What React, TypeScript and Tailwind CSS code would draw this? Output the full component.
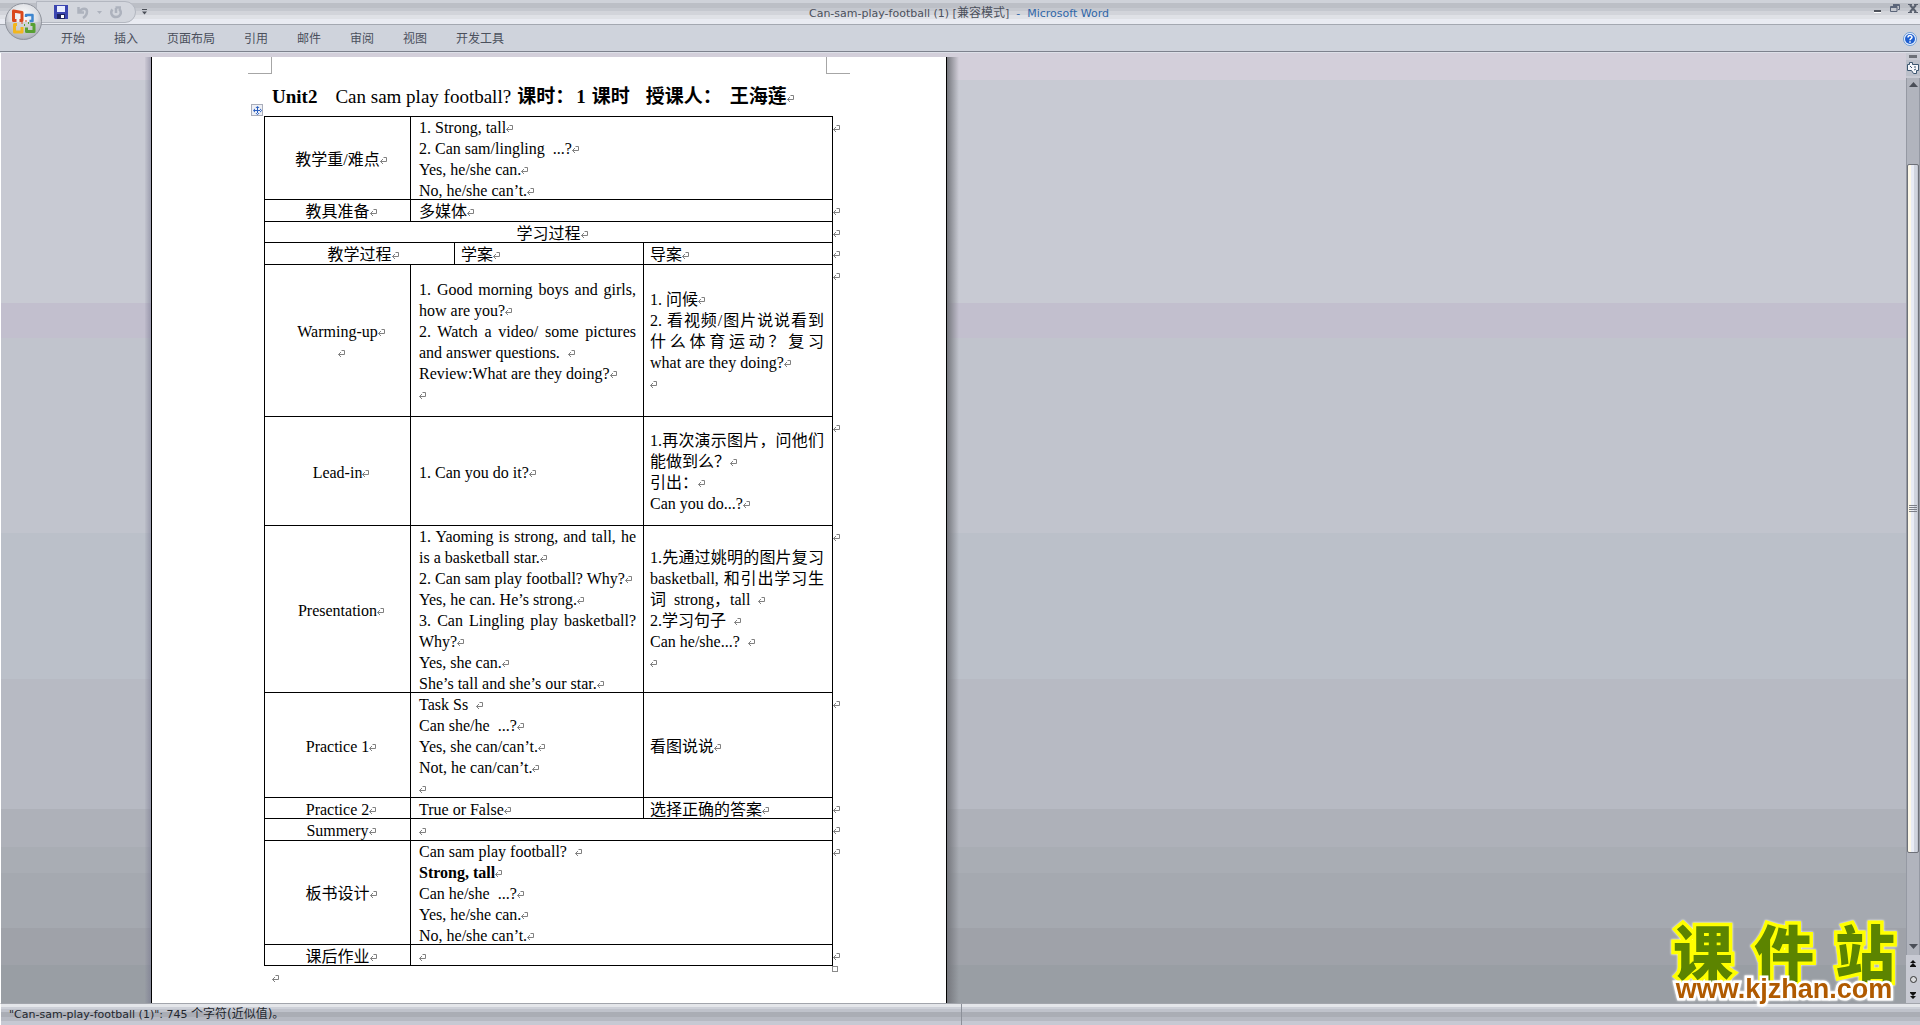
interface Line {
  text?: string;
  bold?: boolean;
  justify?: boolean;
  // blank between the text and its paragraph mark
  gap?: boolean;
  // wrapped line, the paragraph goes on below
  soft?: boolean;
}

interface CellData {
  lines: Line[];
  span?: number;
  center?: boolean;
  tight?: boolean;
}

interface RowData {
  height: string;
  cells: CellData[];
}

const TABS = ["开始", "插入", "页面布局", "引用", "邮件", "审阅", "视图", "开发工具"];

const label = (...texts: string[]): CellData => ({
  center: true,
  lines: texts.map((text) => ({ text })),
});

const ROWS: RowData[] = [
  {
    height: "h-[83px]",
    cells: [
      label("教学重/难点"),
      {
        span: 3,
        lines: [
          { text: "1. Strong, tall" },
          { text: "2. Can sam/lingling  ...?" },
          { text: "Yes, he/she can." },
          { text: "No, he/she can’t." },
        ],
      },
    ],
  },
  {
    height: "h-[22px]",
    cells: [label("教具准备"), { span: 3, lines: [{ text: "多媒体" }] }],
  },
  {
    height: "h-[21px]",
    cells: [{ ...label("学习过程"), span: 4 }],
  },
  {
    height: "h-[22px]",
    cells: [
      { ...label("教学过程"), span: 2 },
      { tight: true, lines: [{ text: "学案" }] },
      { tight: true, lines: [{ text: "导案" }] },
    ],
  },
  {
    height: "h-[152px]",
    cells: [
      label("Warming-up", ""),
      {
        span: 2,
        lines: [
          { text: "1. Good morning boys and girls,", justify: true, soft: true },
          { text: "how are you?" },
          { text: "2. Watch a video/ some pictures", justify: true, soft: true },
          { text: "and answer questions. ", gap: true },
          { text: "Review:What are they doing?" },
          {},
        ],
      },
      {
        tight: true,
        lines: [
          { text: "1. 问候" },
          { text: "2. 看视频/图片说说看到", justify: true, soft: true },
          { text: "什么体育运动？复习", justify: true, soft: true },
          { text: "what are they doing?" },
          {},
        ],
      },
    ],
  },
  {
    height: "h-[109px]",
    cells: [
      label("Lead-in"),
      { span: 2, lines: [{ text: "1. Can you do it?" }] },
      {
        tight: true,
        lines: [
          { text: "1.再次演示图片，问他们", justify: true, soft: true },
          { text: "能做到么？" },
          { text: "引出：" },
          { text: "Can you do...?" },
        ],
      },
    ],
  },
  {
    height: "h-[167px]",
    cells: [
      label("Presentation"),
      {
        span: 2,
        lines: [
          { text: "1. Yaoming is strong, and tall, he", justify: true, soft: true },
          { text: "is a basketball star." },
          { text: "2. Can sam play football? Why?" },
          { text: "Yes, he can. He’s strong." },
          { text: "3. Can Lingling play basketball?", justify: true, soft: true },
          { text: "Why?" },
          { text: "Yes, she can." },
          { text: "She’s tall and she’s our star." },
        ],
      },
      {
        tight: true,
        lines: [
          { text: "1.先通过姚明的图片复习", justify: true, soft: true },
          { text: "basketball, 和引出学习生", justify: true, soft: true },
          { text: "词  strong，tall ", gap: true },
          { text: "2.学习句子 ", gap: true },
          { text: "Can he/she...? ", gap: true },
          {},
        ],
      },
    ],
  },
  {
    height: "h-[105px]",
    cells: [
      label("Practice 1"),
      {
        span: 2,
        lines: [
          { text: "Task Ss ", gap: true },
          { text: "Can she/he  ...?" },
          { text: "Yes, she can/can’t." },
          { text: "Not, he can/can’t." },
          {},
        ],
      },
      { tight: true, lines: [{ text: "看图说说" }] },
    ],
  },
  {
    height: "h-[21px]",
    cells: [
      label("Practice 2"),
      { span: 2, lines: [{ text: "True or False" }] },
      { tight: true, lines: [{ text: "选择正确的答案" }] },
    ],
  },
  {
    height: "h-[22px]",
    cells: [label("Summery"), { span: 3, lines: [{}] }],
  },
  {
    height: "h-[104px]",
    cells: [
      label("板书设计"),
      {
        span: 3,
        lines: [
          { text: "Can sam play football? ", gap: true },
          { text: "Strong, tall", bold: true },
          { text: "Can he/she  ...?" },
          { text: "Yes, he/she can." },
          { text: "No, he/she can’t." },
        ],
      },
    ],
  },
  {
    height: "h-[22px]",
    cells: [label("课后作业"), { span: 3, lines: [{}] }],
  },
];

export default function App() {
  return (
    <div className="flex h-screen flex-col overflow-hidden bg-[#c8cad3] font-['DejaVu_Sans','Noto_Sans_CJK_SC',sans-serif] text-xs text-[#4b505c]">
      <TitleBar />
      <RibbonTabs />
      <main className="relative flex min-h-0 flex-1 border-l border-white">
        <div className="flex min-w-0 flex-1 overflow-hidden bg-[linear-gradient(#d3cfda_0_2.8%,#c8cad3_2.8%_26.3%,#c2bfce_26.3%_30%,#c1c4cd_30%_50.5%,#bbc0c9_50.5%_65.9%,#b7bac3_65.9%_79.6%,#aeb1b9_79.6%_83.6%,#a9adb4_83.6%_86.3%,#a5a9b0_86.3%_92.1%,#9fa2a9_92.1%_96%,#999ea4_96%)] pt-1">
          <div className="ml-36 w-1.5 bg-linear-to-r from-[#8c8ca0]/10 to-[#70708a]/50" />
          <DocumentPage />
          <div className="w-3 bg-linear-to-r from-[#75777d] to-transparent" />
        </div>
        <ScrollBar />
        <Watermark />
      </main>
      <StatusBar />
    </div>
  );
}

function TitleBar() {
  return (
    <header className="relative grid h-6 shrink-0 grid-cols-[1fr_auto_1fr] items-center bg-[linear-gradient(#cfd2d9_0_3px,#bcbfc6_3px_8px,#c5c8cf_8px_11px,#d2d4da_11px_15px,#dfe1e6_15px_19px,#e9ebf2_19px)] pr-0.5">
      {/* Quick access toolbar */}
      <div className="flex items-center pl-9">
        <div className="flex h-[22px] w-[100px] items-center rounded-r-full border border-[#b3b7c0] bg-[#d3d6dd] pl-[17px]">
          <button type="button" aria-label="保存">
            <SaveIcon />
          </button>
          <button type="button" aria-label="撤消" className="ml-2 flex items-center gap-2">
            <svg width="13" height="13" viewBox="0 0 13 13" fill="none">
              <path d="M2.500 1v5.500H8M3 6C6 1.500 11 2 11 5.500c0 3-1.500 5-4 6.500" stroke="#adb2bd" strokeWidth="2.500" />
            </svg>
            <svg width="5" height="3" viewBox="0 0 5 3">
              <path d="M0 0h5L2.500 3z" fill="#adb2bd" />
            </svg>
          </button>
          <button type="button" aria-label="恢复" className="ml-2">
            <svg width="12" height="13" viewBox="0 0 12 13" fill="none">
              <path d="M2.500 3.500C0 6 1.500 11 6 11s6.500-5 3-8M5.500 1.500H11M6 2v5" stroke="#adb2bd" strokeWidth="2.500" />
            </svg>
          </button>
        </div>
        <button type="button" aria-label="自定义快速访问工具栏" className="ml-1.5">
          <svg width="5" height="6" viewBox="0 0 5 6" fill="#4b4f58">
            <path d="M0 0h5v1H0zM0 2.500h5L2.500 5.500z" />
          </svg>
        </button>
      </div>
      <h1 className="pt-0.5 text-[11px] whitespace-pre">
        Can-sam-play-football (1) [<span className="text-xs">兼容模式</span>]{"  "}
        <span className="text-[#2f66a8]">-  Microsoft Word</span>
      </h1>
      <div className="flex h-full items-start justify-end gap-2 pt-1">
        <button type="button" aria-label="最小化">
          <svg width="10" height="9" viewBox="0 0 10 9">
            <path d="M2 6h7v2H2z" fill="#4e525b" />
            <path d="M2 8h7v1H2z" fill="#fff" />
          </svg>
        </button>
        <button type="button" aria-label="还原">
          <svg width="10" height="9" viewBox="0 0 10 9" fill="none" stroke="#5b6579">
            <path d="M3 .5h6.500v5H8" />
            <path d="M3 1.500h6" />
            <path d="M.5 2.500h6.500v5H.5zM1 3.500h6" />
          </svg>
        </button>
        <button type="button" aria-label="关闭">
          <svg width="10" height="9" viewBox="0 0 10 9" fill="none">
            <path d="M2 1l6 7M8 1L2 8" stroke="#59606e" strokeWidth="2" />
            <path d="M0 .5h4M6 .5h4M0 8.500h4M6 8.500h4" stroke="#59606e" />
          </svg>
        </button>
      </div>
      <button type="button" aria-label="Office 按钮" className="absolute top-[3px] left-[5px] z-10">
        <OfficeOrb />
      </button>
    </header>
  );
}

function RibbonTabs() {
  return (
    <div className="flex h-[29px] shrink-0 items-center justify-between border-t border-b border-t-[#a4a8b1] border-b-[#dde0e8] bg-[#cfd3dc] pr-[3px] pl-[61px] shadow-[inset_0_-1px_#7d828d]">
      <nav className="flex gap-[29px]">
        {TABS.map((tab) => (
          <button key={tab} type="button">
            {tab}
          </button>
        ))}
      </nav>
      <button type="button" aria-label="帮助">
        <svg width="14" height="14" viewBox="0 0 14 14" fill="none">
          <circle cx="7" cy="7" r="6.500" fill="#eef4ff" stroke="#6d9bd3" />
          <circle cx="7" cy="7" r="5" fill="#1f5fd0" />
          <path d="M5 5.500C5 3 9 3 9 5.300 9 6.800 7 6.600 7 8.200M7 9.200v1.500" stroke="#fff" strokeWidth="1.500" />
        </svg>
      </button>
    </div>
  );
}

function DocumentPage() {
  return (
    <article className="w-[796px] shrink-0 border-x border-black bg-white px-24 font-['Liberation_Serif','Noto_Sans_CJK_SC',serif] text-base text-black">
      {/* Margin corners */}
      <div className="flex h-[17px] justify-between">
        <div className="w-6 border-r border-b border-[#a6a6a6]" />
        <div className="w-6 border-b border-l border-[#a6a6a6]" />
      </div>
      <h2 className="flex h-[42px] items-baseline pl-6 text-[19px] leading-[46px] font-bold whitespace-pre">
        <span>Unit2</span>
        <span className="ml-[18px] font-normal">Can sam play football?</span>
        <span className="ml-1.5">课时：</span>
        <span className="ml-0.5">1</span>
        <span className="ml-1.5">课时</span>
        <span className="ml-4">授课人：</span>
        <span className="ml-2">王海莲</span>
        <Mark />
      </h2>
      <div className="relative pl-4">
        <div className="absolute -top-3 left-[3px] flex size-3 items-center justify-center border border-[#a9adba] bg-[#eef0f6]">
          <svg width="9" height="9" viewBox="0 0 9 9" fill="#2b5fc0">
            <path d="M4 1h1v7H4zM1 4h7v1H1zM4.500 0L6.500 2h-4zM4.500 9l2-2h-4zM0 4.500l2-2v4zM9 4.500l-2-2v4z" />
          </svg>
        </div>
        <table className="w-full table-fixed border-separate border-spacing-0 leading-[21px]">
          <colgroup>
            <col className="w-[146px]" />
            <col className="w-[44px]" />
            <col className="w-[189px]" />
            <col className="w-[189px]" />
            <col />
          </colgroup>
          <tbody>
            {ROWS.map((row, i) => (
              <tr key={i} className={`group ${row.height}`}>
                {row.cells.map((cell, j) => (
                  <Cell key={j} cell={cell} />
                ))}
                <td className="border-l border-black p-0 align-top">
                  <div className="h-5 pt-px">
                    <Mark />
                  </div>
                </td>
              </tr>
            ))}
          </tbody>
        </table>
        <div className="ml-[568px] size-1.5 border border-[#8a8a8a]" />
      </div>
      <p className="pl-6 leading-3">
        <Mark />
      </p>
    </article>
  );
}

function Cell({ cell }: { cell: CellData }) {
  const pad = cell.center ? "px-2 text-center" : cell.tight ? "pr-2 pl-1.5" : "pr-[7px] pl-2";
  return (
    <td
      colSpan={cell.span}
      className={`border-t border-l border-black py-0 align-middle group-last:border-b ${pad}`}
    >
      <div className="-mb-0.5">
        {cell.lines.map((line, i) => (
          <p
            key={i}
            className={`h-[21px] whitespace-pre-wrap ${line.justify ? "[text-align-last:justify]" : ""} ${line.bold ? "font-bold" : ""}`}
          >
            {line.text}
            {line.gap && " "}
            {!line.soft && <Mark />}
          </p>
        ))}
      </div>
    </td>
  );
}

// Paragraph mark. Takes no width, so centred text stays centred.
function Mark() {
  return (
    <span className="inline-block w-0 overflow-visible">
      <svg className="inline-block max-w-none" width="7" height="8" viewBox="0 0 7 8" fill="none" stroke="#808080">
        <path d="M3.500 .5h3v4H.5M3 2L.5 4.500 3 7" />
      </svg>
    </span>
  );
}

function ScrollBar() {
  return (
    <div className="flex w-3.5 shrink-0 flex-col items-center bg-[#c8cad3]">
      <div className="mt-0.5 h-[3px] w-2 bg-[#6d7078]" />
      <button type="button" aria-label="标尺" className="my-0.5 flex h-4 w-full items-center justify-center bg-[#bcc0ca]">
        <svg width="12" height="12" viewBox="0 0 12 12" fill="#f6f7fb" stroke="#3c5670">
          <path d="M.5 2.500h2v-2h3v2h6v6h-2v3h-3l-2-3h-4z" />
          <path d="M3 4l2 2M8 4v2M7 8l2-1" />
        </svg>
      </button>
      <div className="flex w-full flex-1 flex-col items-center border-x border-[#9599a3] bg-[#b1b4bd]">
        <button type="button" aria-label="向上滚动" className="flex h-[86px] items-start pt-1">
          <svg width="9" height="5" viewBox="0 0 9 5">
            <path d="M0 5h9L4.500 0z" fill="#4a4e57" />
          </svg>
        </button>
        <div className="flex min-h-0 w-full flex-1 flex-col items-center justify-center gap-px rounded-xs border border-[#6d7078] bg-[linear-gradient(90deg,#fdf8e8_0_3px,#e9ecf5_3px_6px,#d0d4de_6px_9px,#c2c6d0_9px)]">
          <Grip />
          <Grip />
          <Grip />
          <Grip />
        </div>
        <button type="button" aria-label="向下滚动" className="flex h-[102px] items-end pb-1.5">
          <svg width="9" height="5" viewBox="0 0 9 5">
            <path d="M0 0h9L4.500 5z" fill="#4a4e57" />
          </svg>
        </button>
      </div>
      <div className="flex h-12 flex-col items-center justify-around">
        <button type="button" aria-label="前一页">
          <svg width="6" height="7" viewBox="0 0 6 7" fill="#111">
            <path d="M0 3h6L3 0zM0 6h6L3 3zM0 6h6v1H0z" />
          </svg>
        </button>
        <button type="button" aria-label="选择浏览对象">
          <svg width="7" height="7" viewBox="0 0 7 7">
            <circle cx="3.500" cy="3.500" r="3" fill="#d9dadd" stroke="#333" />
          </svg>
        </button>
        <button type="button" aria-label="下一页">
          <svg width="6" height="7" viewBox="0 0 6 7" fill="#111">
            <path d="M0 4h6L3 7zM0 1h6L3 4zM0 0h6v1H0z" />
          </svg>
        </button>
      </div>
    </div>
  );
}

function Grip() {
  return <span className="h-px w-2 bg-[#7c7f88]" />;
}

function StatusBar() {
  return (
    <footer className="grid h-[22px] shrink-0 grid-cols-2 border-t border-l border-t-[#a2a5ac] border-l-white bg-[linear-gradient(#e4e6ea_0_3px,#cdd0d8_3px_5px,#bfc2cb_5px_8px,#aaadb5_8px_13px,#b6b9c2_13px_17px,#c6c9d3_17px)] text-[11px] text-[#22262e]">
      <p className="self-center pl-2">
        "Can-sam-play-football (1)": 745 <span className="text-xs">个字符(近似值)。</span>
      </p>
      <div className="border-l border-[#8c9099]" />
    </footer>
  );
}

function Watermark() {
  return (
    <div className="absolute right-[21px] bottom-0 w-[230px] drop-shadow-[0_0_1px_#fff]">
      <p className="flex justify-between px-1 font-['Noto_Sans_CJK_SC',sans-serif] text-[60px] leading-[50px] font-black text-[#5c8400] [-webkit-text-stroke:7px_#ffff00] [paint-order:stroke_fill]">
        <span>课</span>
        <span>件</span>
        <span>站</span>
      </p>
      <p className="text-center font-['Liberation_Sans',sans-serif] text-[27px] leading-[28px] font-bold text-[#b05a00] [-webkit-text-stroke:5px_#fff] [paint-order:stroke_fill]">
        www.kjzhan.com
      </p>
    </div>
  );
}

function SaveIcon() {
  return (
    <svg width="14" height="14" viewBox="0 0 14 14">
      <path d="M0 0h14v14H1l-1-1z" fill="#3b45b0" />
      <path d="M3 1h8v6H3z" fill="#e8edff" />
      <path d="M3 9h8v5H3z" fill="#1d2260" />
      <path d="M7 10h3v3H7z" fill="#fff" />
    </svg>
  );
}

function OfficeOrb() {
  return (
    <svg width="37" height="37" viewBox="0 0 37 37">
      <defs>
        <radialGradient id="orb" cx="50%" cy="35%" r="65%">
          <stop offset="0" stopColor="#ffffff" />
          <stop offset="0.6" stopColor="#dcdee3" />
          <stop offset="1" stopColor="#a3a7b0" />
        </radialGradient>
      </defs>
      <circle cx="18.500" cy="18.500" r="18" fill="url(#orb)" stroke="#8f939c" />
      <path d="M2 19h33a16.500 16.500 0 0 1-33 0z" fill="#b9bcc4" opacity="0.5" />
      <g fill="none" strokeLinejoin="round">
        <path d="M14.500 17.500h2.500V9.500L8.500 8v9.500h3" stroke="#d9481c" strokeWidth="3" />
        <path d="M21 14v-2h6.500v6h-3" stroke="#3f86cf" strokeWidth="2.500" />
        <path d="M12 21.500H9.500V29H17v-5" stroke="#f2b61e" strokeWidth="3" />
        <path d="M25.500 21.500H29v7h-7.500v-4" stroke="#57a032" strokeWidth="3" />
        <path d="M16.500 20h1M20.500 18h1" stroke="#d9481c" strokeWidth="2" />
        <path d="M19 22h1M23 20h1" stroke="#57a032" strokeWidth="2" />
      </g>
    </svg>
  );
}
